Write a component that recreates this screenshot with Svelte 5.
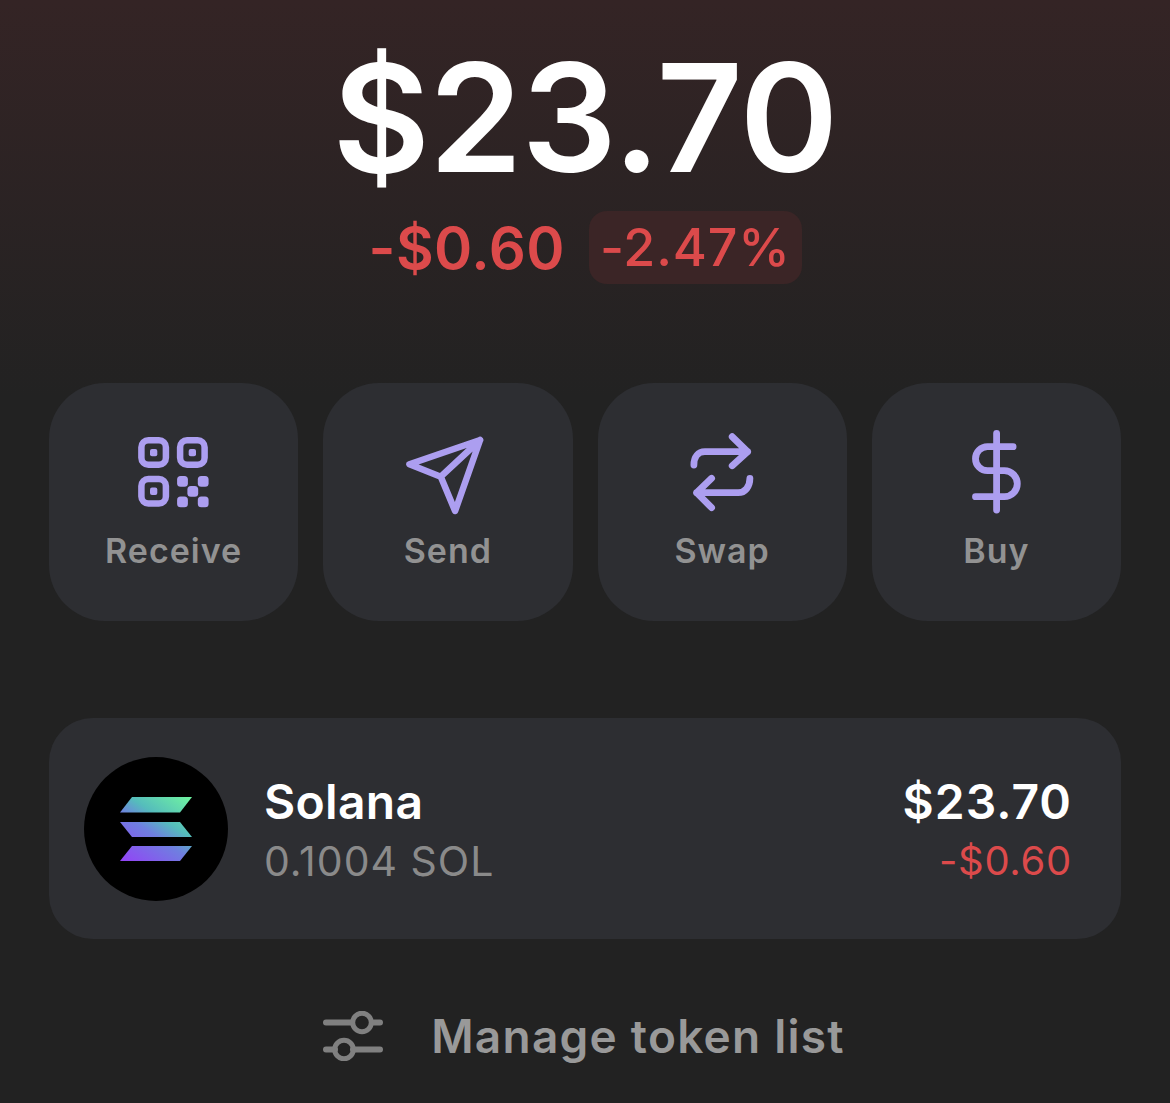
<script>
  const sliderColor = '#808080';
</script>

<div class="page">
  <div class="balance">$23.70</div>
  <div class="change">
    <span class="abs">-$0.60</span>
    <span class="pct">-2.47%</span>
  </div>

  <div class="actions">
    <div class="action">
      <svg class="icon" viewBox="0 0 80 88" aria-hidden="true">
        <g fill="none" stroke="#ac9ef0" stroke-width="6.500">
          <rect x="7.400" y="12.300" width="24.500" height="24.500" rx="7" />
          <rect x="46.100" y="12.300" width="24.500" height="24.500" rx="7" />
          <rect x="7.400" y="51" width="24.500" height="24.500" rx="7" />
        </g>
        <g fill="#ac9ef0">
          <rect x="16" y="21" width="7.300" height="7.300" rx="2" />
          <rect x="54.700" y="21" width="7.300" height="7.300" rx="2" />
          <rect x="16" y="59.600" width="7.300" height="7.300" rx="2" />
          <rect x="43.100" y="48" width="10.800" height="10.800" rx="3.500" />
          <rect x="63.800" y="48" width="10.800" height="10.800" rx="3.500" />
          <rect x="53.400" y="58" width="10.800" height="10.800" rx="3.500" />
          <rect x="43.100" y="68.500" width="10.800" height="10.800" rx="3.500" />
          <rect x="63.800" y="68.500" width="10.800" height="10.800" rx="3.500" />
        </g>
      </svg>
      <span>Receive</span>
    </div>
    <div class="action">
      <svg class="icon" viewBox="0 0 80 88" aria-hidden="true">
        <path d="M72.100 12 L1.400 36.300 L32.800 48.700 L47.100 83 Z M32.800 48.700 L72.100 12" fill="none" stroke="#ac9ef0" stroke-width="6.500" stroke-linejoin="round" stroke-linecap="round" />
      </svg>
      <span>Send</span>
    </div>
    <div class="action">
      <svg class="icon" viewBox="0 0 80 88" aria-hidden="true">
        <path d="M11.900 37 C11.900 29 16 23.700 22.900 23.700 L65.600 23.700 M50.200 8.700 L65.600 23.700 L50.200 37.700 M67.900 50.300 C67.900 59 63 64.700 56.200 64.700 L14.600 64.700 M29.600 50.300 L14.600 64.700 L29.600 79.700" fill="none" stroke="#ac9ef0" stroke-width="6.800" stroke-linejoin="round" stroke-linecap="round" />
      </svg>
      <span>Swap</span>
    </div>
    <div class="action">
      <svg class="icon" viewBox="0 0 80 88" aria-hidden="true">
        <path d="M40.600 5.300 V82 M57.100 18.700 H31.500 A12 12 0 0 0 31.500 42.700 H48.300 A13 13 0 0 1 48.300 68.700 H19.500" fill="none" stroke="#ac9ef0" stroke-width="6.800" stroke-linejoin="round" stroke-linecap="round" />
      </svg>
      <span>Buy</span>
    </div>
  </div>

  <div class="token">
    <svg class="logo" viewBox="0 0 144 144" aria-hidden="true">
      <defs>
        <linearGradient id="sol" gradientUnits="userSpaceOnUse" x1="50" y1="110" x2="100" y2="35">
          <stop offset="0" stop-color="#9146f5" />
          <stop offset="0.42" stop-color="#6f7fe0" />
          <stop offset="0.62" stop-color="#55bcbc" />
          <stop offset="1" stop-color="#70f5a0" />
        </linearGradient>
      </defs>
      <circle cx="72" cy="72" r="72" fill="#000" />
      <g fill="url(#sol)">
        <path d="M48 40 H108 L96 55.500 H36 Z" />
        <path d="M36 65 H96 L108 80 H48 Z" />
        <path d="M48 89 H108 L96 104 H36 Z" />
      </g>
    </svg>
    <div class="token-main">
      <div class="name">Solana</div>
      <div class="sub">0.1004 SOL</div>
    </div>
    <div class="token-value">
      <div class="name amount">$23.70</div>
      <div class="delta">-$0.60</div>
    </div>
  </div>

  <div class="manage">
    <svg class="sliders" viewBox="0 0 60 50" aria-hidden="true">
      <g fill="none" stroke={sliderColor}>
        <path d="M3 11.500 H29 M51 11.500 H57 M3 38.500 H12 M30 38.500 H57" stroke-width="6" stroke-linecap="round" />
        <circle cx="39" cy="11.500" r="9.300" stroke-width="5" />
        <circle cx="21" cy="38.500" r="9.300" stroke-width="5" />
      </g>
    </svg>
    <span>Manage token list</span>
  </div>
</div>

<style>
  :global(body) {
    margin: 0;
    background: #222222;
  }

  .page {
    box-sizing: border-box;
    height: 1103px;
    padding: 0 49px;
    overflow: hidden;
    font-family: Inter, "Liberation Sans", sans-serif;
    background: linear-gradient(180deg, #342425 0%, #222222 36%);
  }

  .balance {
    padding-top: 30px;
    color: #fff;
    font-size: 150px;
    font-weight: 600;
    letter-spacing: -1px;
    line-height: 176px;
    text-align: center;
  }

  .change {
    display: flex;
    justify-content: center;
    align-items: center;
    gap: 24px;
    margin-top: 5px;
    color: #dc4a4b;
    font-size: 58px;
    font-weight: 600;
    letter-spacing: 0.500px;
  }

  .pct {
    padding: 0 11px;
    height: 73px;
    line-height: 73px;
    border-radius: 18px;
    background: #3b2526;
    font-size: 52px;
    font-weight: 500;
    letter-spacing: 0.800px;
  }

  .actions {
    display: grid;
    grid-template-columns: repeat(4, 1fr);
    gap: 25px;
    margin-top: 99px;
  }

  .action {
    display: flex;
    flex-direction: column;
    align-items: center;
    height: 238px;
    border-radius: 56px;
    background: #2d2e32;
    color: #929292;
    font-size: 34px;
    font-weight: 600;
    letter-spacing: 1px;
  }

  .icon {
    width: 80px;
    height: 88px;
    margin-top: 45px;
    overflow: visible;
  }

  .action span {
    line-height: 42px;
    margin-top: 14px;
  }

  .token {
    display: flex;
    align-items: center;
    height: 221px;
    margin-top: 97px;
    padding: 0 49px 0 35px;
    border-radius: 44px;
    background: #2d2e32;
  }

  .logo {
    width: 144px;
    height: 144px;
    margin-right: 36px;
  }

  .token-main {
    flex: 1;
  }

  .token-value {
    text-align: right;
  }

  .name {
    color: #fff;
    font-size: 48px;
    font-weight: 600;
    letter-spacing: 0.300px;
    line-height: 60px;
    margin-top: 6px;
  }

  .amount {
    letter-spacing: 1px;
  }

  .sub,
  .delta {
    font-size: 41px;
    line-height: 60px;
    letter-spacing: 1px;
    margin-top: -1px;
  }

  .sub {
    color: #8a8a8a;
  }

  .delta {
    color: #dc4a4b;
    font-size: 40px;
    letter-spacing: 0.700px;
  }

  .manage {
    display: flex;
    align-items: center;
    justify-content: center;
    gap: 48px;
    margin-top: 67px;
    padding-right: 2px;
    color: #999999;
    font-size: 46px;
    font-weight: 600;
    letter-spacing: 1.250px;
    line-height: 60px;
  }

  .sliders {
    width: 60px;
    height: 50px;
  }
</style>
